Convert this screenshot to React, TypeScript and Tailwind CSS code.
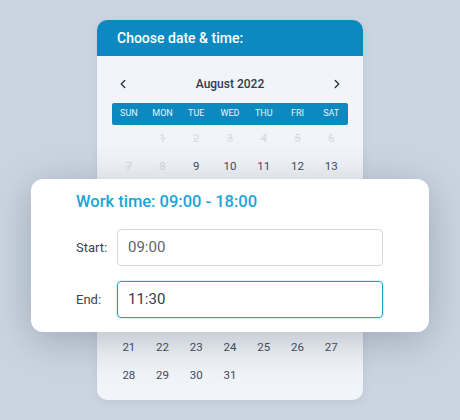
import { ChevronLeft, ChevronRight } from "lucide-react";

const days = ["SUN", "MON", "TUE", "WED", "THU", "FRI", "SAT"];

// null = empty cell, negative = disabled (past) date
const topRows: (number | null)[][] = [
  [null, -1, -2, -3, -4, -5, -6],
  [-7, -8, 9, 10, 11, 12, 13],
];
const bottomRows: (number | null)[][] = [
  [21, 22, 23, 24, 25, 26, 27],
  [28, 29, 30, 31, null, null, null],
];

function DateRow({ row }: { row: (number | null)[] }) {
  return (
    <div className="grid grid-cols-7 h-[28px] items-center text-center text-[11.5px]">
      {row.map((d, i) =>
        d === null ? (
          <span key={i} />
        ) : d < 0 ? (
          <span key={i} className="text-[#d3d9e2] line-through decoration-[#dde2e9]">
            {-d}
          </span>
        ) : (
          <span key={i} className="text-[#414a58]">
            {d}
          </span>
        )
      )}
    </div>
  );
}

export default function App() {
  return (
    <div
      className="relative w-[460px] h-[420px] bg-[#cbd5e1] overflow-hidden"
      style={{ fontFamily: "Roboto, 'Noto Sans', sans-serif" }}
    >
      {/* Calendario */}
      <div className="ml-[97px] pt-[20px]">
        <div className="w-[266px] h-[380px] rounded-[10px] bg-[#f1f4f8] shadow-[0_2px_8px_rgba(100,116,139,0.15)] overflow-hidden">
          <div className="h-[36px] bg-[#0d89c0] px-5 flex items-center">
            <h2 className="text-[14px] font-medium text-white">
              Choose date &amp; time:
            </h2>
          </div>

          <div className="px-[15px]">
            <div className="mt-[18px] h-[20px] flex items-center justify-between px-[4px]">
              <ChevronLeft className="w-[14px] h-[14px] text-[#2f3a4b]" strokeWidth={2.5} />
              <span className="text-[12px] font-medium text-[#2f3a4b]">August 2022</span>
              <ChevronRight className="w-[14px] h-[14px] text-[#2f3a4b]" strokeWidth={2.5} />
            </div>

            <div className="mt-[9px] h-[22px] rounded-[2px] bg-[#0d89c0] grid grid-cols-7 items-center text-center">
              {days.map((d) => (
                <span key={d} className="text-[9px] text-white/90">
                  {d}
                </span>
              ))}
            </div>

            {topRows.map((r, i) => (
              <DateRow key={i} row={r} />
            ))}
            {/* semanas tapadas por la tarjeta */}
            <div className="h-[153px]" />
            {bottomRows.map((r, i) => (
              <DateRow key={i} row={r} />
            ))}
          </div>
        </div>
      </div>

      {/* Tarjeta de horario */}
      <div className="absolute left-[31px] top-[179px] w-[398px] h-[153px] rounded-[12px] bg-white shadow-[0_8px_40px_rgba(71,85,105,0.35)] pl-[45px] pr-[46px] pt-[13px]">
        <h3 className="text-[16.5px] font-medium leading-[20px] text-[#1aa5d8]">
          Work time: 09:00 - 18:00
        </h3>
        <div className="mt-[17px] flex items-center">
          <span className="w-[41px] text-[13px] text-[#3b4350]">Start:</span>
          <div className="w-[266px] h-[37px] rounded-[4px] border border-[#d3d9e1] flex items-center pl-[10px] text-[15px] text-[#5b6472]">
            09:00
          </div>
        </div>
        <div className="mt-[15px] flex items-center">
          <span className="w-[41px] text-[13px] text-[#3b4350]">End:</span>
          <div className="w-[266px] h-[37px] rounded-[4px] border border-[#1ea3d0] shadow-[0_0_0_1px_rgba(30,163,208,0.15)] flex items-center pl-[10px] text-[15px] text-[#343c48]">
            11:30
          </div>
        </div>
      </div>
    </div>
  );
}
